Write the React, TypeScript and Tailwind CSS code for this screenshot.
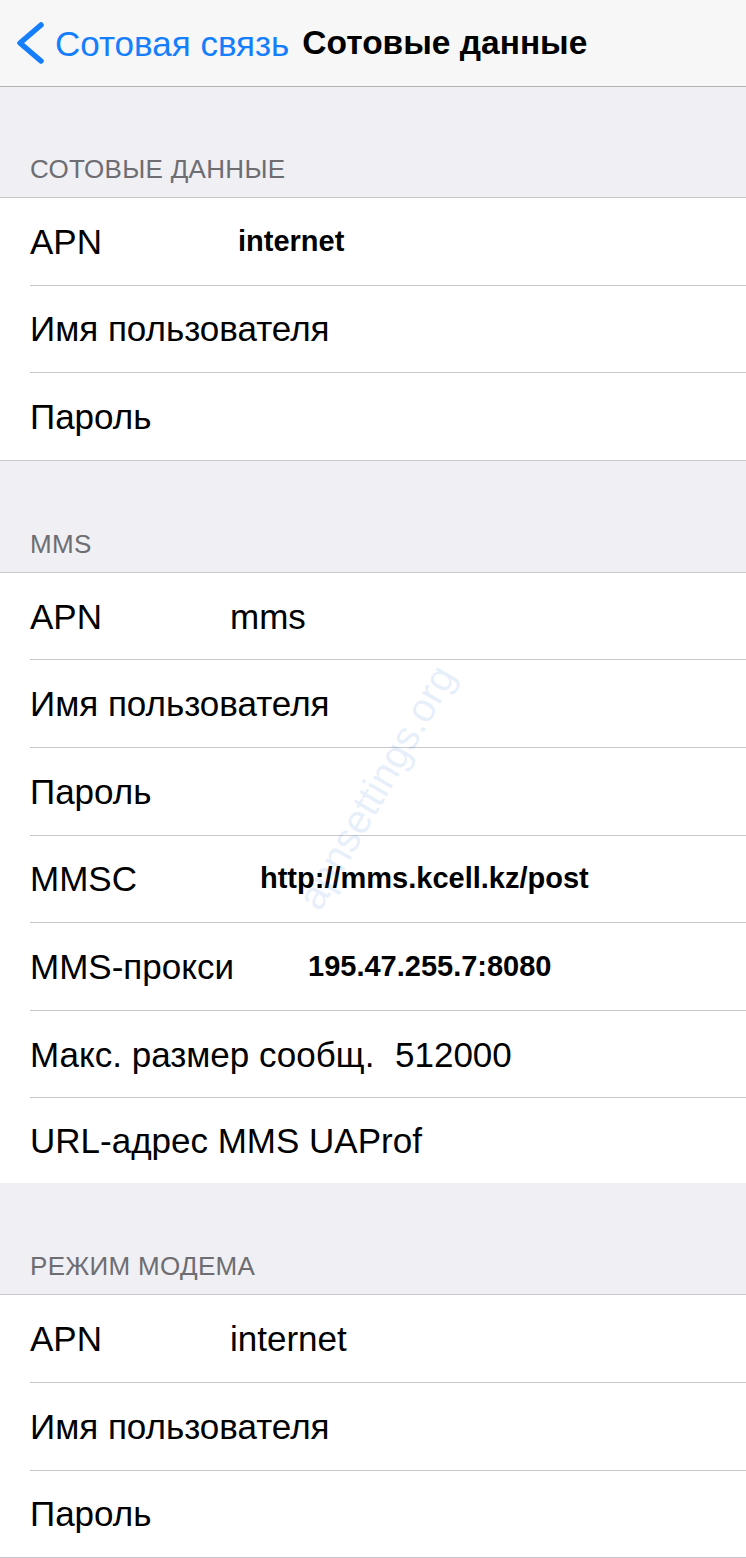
import React from "react";

type Row = { label: string; value?: string; bold?: boolean; labelW?: string };

const font = { fontFamily: '"Liberation Sans", Arial, sans-serif' };

function Header({ text, h }: { text: string; h: string }) {
  return (
    <div className={`${h} bg-[#efeff4] flex items-end pl-[30px] pb-[13px]`}>
      <span className="text-[26px] leading-[29px] text-[#6d6d72] tracking-[0.3px]">{text}</span>
    </div>
  );
}

function Group({ rows, lastNoBorder, lastH }: { rows: Row[]; lastNoBorder?: boolean; lastH?: string }) {
  return (
    <div className={`bg-white border-t border-[#c8c7cc] ${lastNoBorder ? "" : "border-b"}`}>
      {rows.map((r, i) => {
        const last = i === rows.length - 1;
        return (
          <div key={i} className="pl-[30px]">
            <div
              className={`flex items-center ${last && lastH ? lastH : "h-[86.6px]"} ${last ? "" : "border-b border-[#c8c7cc]"} box-content`}
            >
              <span className={`${r.labelW ?? ""} shrink-0 text-[35px] text-black leading-none`}>{r.label}</span>
              {r.value && (
                <span className={`${r.bold ? "font-bold text-[29px]" : "text-[35px]"} text-black leading-none`}>
                  {r.value}
                </span>
              )}
            </div>
          </div>
        );
      })}
    </div>
  );
}

export default function App() {
  return (
    <div className="relative w-[746px] h-[1558px] overflow-hidden bg-[#efeff4]" style={font}>
      <div className="h-[86px] bg-[#f7f7f8] border-b border-[#b2b2b2] box-content flex items-center">
        <svg width="40" height="44" viewBox="0 0 40 44" className="ml-[10px] mr-[5px]">
          <path d="M31 4 L10 22 L31 40" fill="none" stroke="#157efb" strokeWidth="5.5" strokeLinecap="round" strokeLinejoin="round" />
        </svg>
        <span className="text-[35px] text-[#157efb] leading-none">Сотовая связь</span>
        <span className="ml-[13px] text-[33.5px] font-bold text-black leading-none">Сотовые данные</span>
      </div>
      <Header text="СОТОВЫЕ ДАННЫЕ" h="h-[110px]" />
      <Group
        rows={[
          { label: "APN", value: "internet", bold: true, labelW: "w-[208px]" },
          { label: "Имя пользователя" },
          { label: "Пароль" },
        ]}
      />
      <Header text="MMS" h="h-[111px]" />
      <Group
        lastNoBorder
        lastH="h-[85px]"
        rows={[
          { label: "APN", value: "mms", labelW: "w-[200px]" },
          { label: "Имя пользователя" },
          { label: "Пароль" },
          { label: "MMSC", value: "http://mms.kcell.kz/post", bold: true, labelW: "w-[230px]" },
          { label: "MMS-прокси", value: "195.47.255.7:8080", bold: true, labelW: "w-[278px]" },
          { label: "Макс. размер сообщ.", value: "512000", labelW: "w-[365px]" },
          { label: "URL-адрес MMS UAProf" },
        ]}
      />
      <Header text="РЕЖИМ МОДЕМА" h="h-[111px]" />
      <Group
        rows={[
          { label: "APN", value: "internet", labelW: "w-[200px]" },
          { label: "Имя пользователя" },
          { label: "Пароль" },
        ]}
      />
      <div className="pointer-events-none absolute left-[376px] top-[787px] -translate-x-1/2 -translate-y-1/2 -rotate-60 whitespace-nowrap text-[40px] text-[rgba(70,130,215,0.14)]">
        apnsettings.org
      </div>
    </div>
  );
}
